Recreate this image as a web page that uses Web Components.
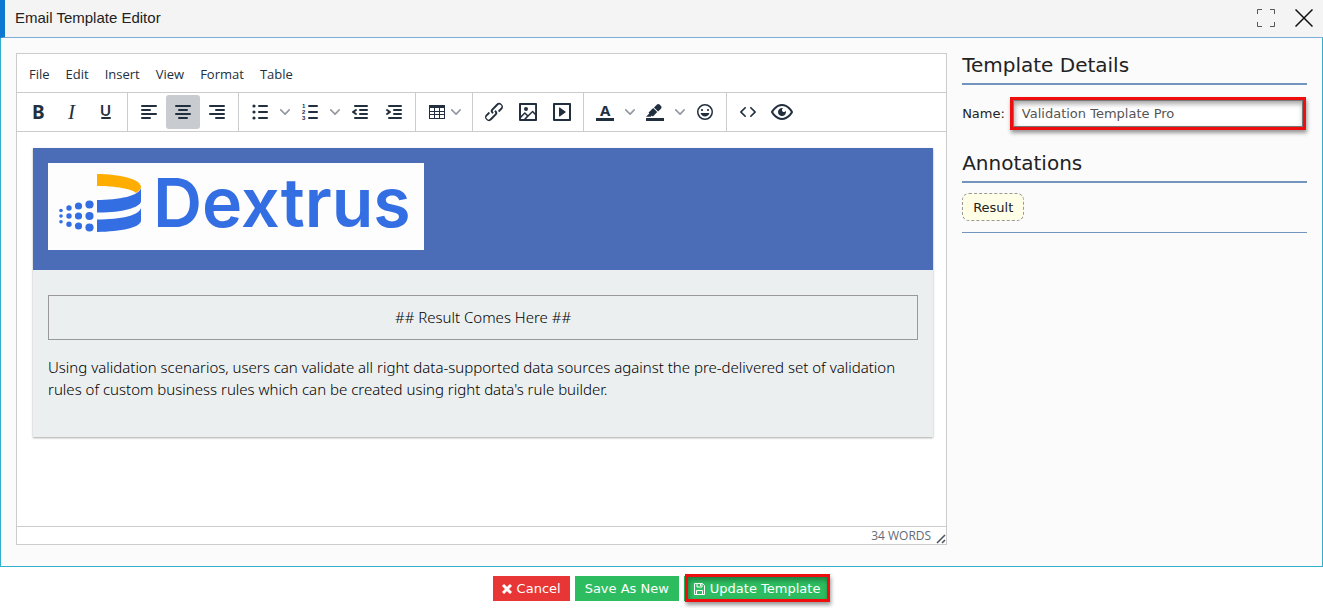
<!DOCTYPE html>
<html lang="en">
<head>
<meta charset="utf-8">
<title>Email Template Editor</title>
<style>
html, body { margin: 0; background: #fff; }
</style>
</head>
<body>
<template-dialog></template-dialog>

<script>
const row = (x, y, end = 19) => `<path d="M${x} ${y}H${end}" stroke="currentColor" stroke-width="2" stroke-linecap="round"/>`;
const ICONS = {
  bold: `<text x="6" y="19" font-family="Noto Sans" font-weight="700" font-size="19">B</text>`,
  italic: `<text x="8" y="19" font-family="Liberation Serif" font-style="italic" font-size="21">I</text>`,
  underline: `<text x="6" y="16" font-family="Inter" font-weight="600" font-size="15">U</text>${row(8, 18, 16)}`,
  left: row(5, 6) + row(5, 10, 13) + row(5, 14) + row(5, 18, 13),
  center: row(5, 6) + row(8, 10, 16) + row(5, 14) + row(8, 18, 16),
  right: row(5, 6) + row(11, 10) + row(5, 14) + row(11, 18),
  bullets: row(11, 6) + row(11, 12) + row(11, 18) + `<circle cx="6" cy="6" r="1.6"/><circle cx="6" cy="12" r="1.6"/><circle cx="6" cy="18" r="1.6"/>`,
  numbers: row(11, 6) + row(11, 12) + row(11, 18) + `<g font-family="Liberation Sans" font-weight="700" font-size="6"><text x="4" y="8">1</text><text x="4" y="14">2</text><text x="4" y="20">3</text></g>`,
  outdent: row(7, 6) + row(12, 10) + row(12, 14) + row(7, 18) + `<path d="M8.6 13.2a1 1 0 01-1.2 1.6l-3-2a1 1 0 010-1.6l3-2a1 1 0 011.2 1.6L6.8 12l1.8 1.2z"/>`,
  indent: row(7, 6) + row(12, 10) + row(12, 14) + row(7, 18) + `<path d="M4.4 13.2a1 1 0 001.2 1.6l3-2a1 1 0 000-1.6l-3-2a1 1 0 00-1.2 1.6L6.2 12l-1.8 1.2z"/>`,
  table: `<path d="M4 5h16v14H4V5zm1 3v3h4V8H5zm5 0v3h4V8h-4zm5 0v3h4V8h-4zM5 12v2h4v-2H5zm5 0v2h4v-2h-4zm5 0v2h4v-2h-4zM5 15v3h4v-3H5zm5 0v3h4v-3h-4zm5 0v3h4v-3h-4z" fill-rule="evenodd"/>`,
  link: `<path d="M6.2 12.3a1 1 0 011.4 1.4l-2.1 2a2 2 0 102.7 2.8l4.8-4.8a1 1 0 000-1.4 1 1 0 111.4-1.3 2.9 2.9 0 010 4L9.6 20a3.9 3.9 0 01-5.5-5.5l2-2zm11.6-.6a1 1 0 01-1.4-1.4l2-2a2 2 0 10-2.6-2.8L11 10.3a1 1 0 000 1.4A1 1 0 119.6 13a2.9 2.9 0 010-4L14.4 4a3.9 3.9 0 015.5 5.5l-2 2z"/>`,
  image: `<path fill-rule="evenodd" d="M5 15.7l3.3-3.2c.3-.3.7-.3 1 0L12 15l4.1-4c.3-.4.8-.4 1 0l2 1.9V5H5v10.7zM5 18V19h3l2.8-2.9-2-2L5 17.9zm14-3l-2.5-2.4-6.4 6.5H19v-4zM4 3h16c.6 0 1 .4 1 1v16c0 .6-.4 1-1 1H4a1 1 0 01-1-1V4c0-.6.4-1 1-1zm6 8a2 2 0 100-4 2 2 0 000 4z"/>`,
  media: `<path fill-rule="evenodd" d="M4 3h16c.6 0 1 .4 1 1v16c0 .6-.4 1-1 1H4a1 1 0 01-1-1V4c0-.6.4-1 1-1zm1 2v14h14V5H5zm4.8 2.6l5.6 4a.5.5 0 010 .8l-5.6 4A.5.5 0 019 16V8a.5.5 0 01.8-.4z"/>`,
  color: `<path d="M3 18h18v3H3z"/><text x="7" y="16" font-family="Noto Sans" font-weight="700" font-size="15">A</text>`,
  highlight: `<path d="M3 18h18v3H3zM7.7 16.7H3l3.3-3.3-.7-.8L10.2 8l4 4.1-4 4.2c-.2.2-.6.2-.8 0l-.6-.7-1.1 1.1zm5-7.5L11 7.4l3-2.9a2 2 0 012.6 0L18 6c.7.7.7 2 0 2.7l-2.9 2.9-1.8-1.8-.5-.6"/>`,
  emoji: `<path fill-rule="evenodd" d="M9 11c.6 0 1-.4 1-1s-.4-1-1-1a1 1 0 00-1 1c0 .6.4 1 1 1zm6 0c.6 0 1-.4 1-1s-.4-1-1-1a1 1 0 00-1 1c0 .6.4 1 1 1zm-3 5.5c2.1 0 4-1.5 4.4-3.5H7.6c.5 2 2.3 3.5 4.4 3.5zM12 4a8 8 0 100 16 8 8 0 000-16zm0 14.5a6.5 6.5 0 110-13 6.5 6.5 0 010 13z"/>`,
  code: `<path d="M9.8 15.7c.3.3.3.8 0 1-.3.4-.9.4-1.2 0l-4.4-4.1a.8.8 0 010-1.2l4.4-4.2c.3-.3.9-.3 1.2 0 .3.3.3.8 0 1.1L6 12l3.8 3.7zM14.2 15.7c-.3.3-.3.8 0 1 .4.4.9.4 1.2 0l4.4-4.1c.3-.3.3-.8 0-1.2l-4.4-4.2a.8.8 0 00-1.2 0c-.3.3-.3.8 0 1.1L18 12l-3.8 3.7z"/>`,
  preview: `<path fill-rule="evenodd" d="M3.5 12.5c.5.8 1.1 1.6 1.8 2.3 2 2 4.2 3.2 6.7 3.2s4.7-1.2 6.7-3.2a16.2 16.2 0 002.1-2.8 15.7 15.7 0 00-2.1-2.8c-2-2-4.2-3.2-6.7-3.2a9.3 9.3 0 00-6.7 3.2A16.2 16.2 0 003.2 12c0 .2.2.3.3.5zm-2.4-1l.7-1.2L4 7.8C6.2 5.4 8.9 4 12 4c3 0 5.8 1.4 8.1 3.8a18.2 18.2 0 012.8 3.7v1l-.7 1.2-2.1 2.5c-2.3 2.4-5 3.8-8.1 3.8-3 0-5.8-1.4-8.1-3.8a18.2 18.2 0 01-2.8-3.7 1 1 0 010-1z"/><path d="M13.1 8.2a2 2 0 102.7 2.6 4 4 0 11-2.7-2.6z"/>`
};
const define = (name, html) => customElements.define(name, class extends HTMLElement {
  constructor() {
    super();
    this.attachShadow({ mode: 'open' }).innerHTML = html;
  }
});

class ToolButton extends HTMLElement {
  connectedCallback() {
    if (this.shadowRoot) return;
    const menu = this.hasAttribute('menu');
    this.attachShadow({ mode: 'open' }).innerHTML = `
<style>
:host { display: block; color: #222f3e; }
button { display: flex; align-items: center; height: 34px; min-width: 34px; padding: 0 5px; border: 0; border-radius: 3px; background: none; color: inherit; }
:host([active]) button { background: #c8cbcf; }
:host([menu=split]) button { padding-right: 0; gap: 8px; width: 50px; }
:host([menu=joined]) button { width: 48px; padding-right: 0; gap: 2px; }
svg { flex: none; fill: currentColor; }
.chevron { fill: #90979f; }
</style>
<button type="button" aria-label="${this.getAttribute('label')}">
<svg width="24" height="24" viewBox="0 0 24 24">${ICONS[this.getAttribute('icon')]}</svg>
${menu ? '<svg class="chevron" width="10" height="10" viewBox="0 0 10 10"><path d="M8.7 2.2c.3-.3.8-.3 1 0 .4.4.4.9 0 1.2L5.7 7.8c-.3.3-.9.3-1.2 0L.2 3.4a.8.8 0 010-1.2c.3-.3.8-.3 1.1 0L5 6l3.7-3.8z"/></svg>' : ''}
</button>`;
  }
}
customElements.define('tool-button', ToolButton);

define('tool-group', `
<style>
:host { display: flex; align-items: center; height: 38px; padding: 0 4px; border-right: 1px solid #ccc; }
:host(:last-of-type) { border-right: 0; }
</style><slot></slot>`);

define('brand-logo', `
<style>
:host { display: block; width: 376px; max-width: 100%; background: #fdfdfd; }
svg { display: block; width: 100%; overflow: visible; }
</style>
<svg viewBox="0 0 376 87" role="img" aria-label="Dextrus">
<g fill="#346ee3">
<circle cx="13" cy="47.5" r="1.8"/><circle cx="13" cy="53" r="1.8"/><circle cx="13" cy="58.7" r="1.8"/>
<circle cx="21" cy="45" r="2.7"/><circle cx="21" cy="53" r="2.7"/><circle cx="21" cy="61.3" r="2.7"/>
<circle cx="30.5" cy="43" r="3.6"/><circle cx="30.5" cy="53" r="3.6"/><circle cx="30.5" cy="63" r="3.6"/>
<circle cx="41.5" cy="41.5" r="4.1"/><circle cx="41.5" cy="53" r="4.1"/><circle cx="41.5" cy="64.5" r="4.1"/>
<path d="M49 37c21 0 44-4 44-13v14c0 7-22 12-44 11.5z"/>
<path d="M49 56.5c24 0 43-4 44-12v13c0 7-20 11-44 11.5z"/>
<text x="105" y="64" font-family="Inter" font-weight="600" font-size="68">Dextrus</text>
</g>
<path fill="#ffad00" d="M49 11c22 0 44 5 44 13 0 2-2 4-5 6-4-4-20-7-39-7z"/>
</svg>`);

define('menu-bar', `
<style>
:host { display: flex; align-items: center; height: 36px; padding: 2px 4px 0; border-bottom: 1px solid #ccc; }
button { border: 0; background: none; padding: 4px 8px; color: #222f3e; font: 13px/20px "Open Sans", sans-serif; }
</style>
<button>File</button><button>Edit</button><button>Insert</button><button>View</button><button>Format</button><button>Table</button>`);

define('tool-bar', `
<style>
:host { display: flex; flex-wrap: wrap; border-bottom: 1px solid #ccc; }
</style>
<tool-group>
<tool-button icon="bold" label="Bold"></tool-button><tool-button icon="italic" label="Italic"></tool-button><tool-button icon="underline" label="Underline"></tool-button>
</tool-group>
<tool-group>
<tool-button icon="left" label="Align left"></tool-button><tool-button icon="center" label="Align center" active></tool-button><tool-button icon="right" label="Align right"></tool-button>
</tool-group>
<tool-group>
<tool-button icon="bullets" label="Bullet list" menu="split"></tool-button><tool-button icon="numbers" label="Numbered list" menu="split"></tool-button><tool-button icon="outdent" label="Decrease indent"></tool-button><tool-button icon="indent" label="Increase indent"></tool-button>
</tool-group>
<tool-group><tool-button icon="table" label="Table" menu="joined"></tool-button></tool-group>
<tool-group>
<tool-button icon="link" label="Link"></tool-button><tool-button icon="image" label="Image"></tool-button><tool-button icon="media" label="Media"></tool-button>
</tool-group>
<tool-group>
<tool-button icon="color" label="Text color" menu="split"></tool-button><tool-button icon="highlight" label="Background color" menu="split"></tool-button><tool-button icon="emoji" label="Emoticons"></tool-button>
</tool-group>
<tool-group><tool-button icon="code" label="Source code"></tool-button><tool-button icon="preview" label="Preview"></tool-button></tool-group>`);

define('mail-preview', `
<style>
:host { display: block; background: #ebeff0; box-shadow: 0 1px 2px rgba(0,0,0,.35); color: #000; font: 300 15px/22px "Noto Sans", sans-serif; }
header { background: #4b6cb7; padding: 15px 15px 20px; }
.body { padding: 25px 15px 37px; }
.result { border: 1px solid #999; padding: 10px 10px 11px; text-align: center; }
p { margin: 16px 0 0; }
</style>
<header><brand-logo></brand-logo></header>
<div class="body">
<div class="result">## Result Comes Here ##</div>
<p>Using validation scenarios, users can validate all right data-supported data sources against the pre-delivered set of validation rules of custom business rules which can be created using right data's rule builder.</p>
</div>`);

define('rich-editor', `
<style>
:host { display: flex; flex-direction: column; box-sizing: border-box; border: 1px solid #ccc; background: #fff; min-width: 0; }
main { flex: 1; padding: 16px 13px 16px 16px; }
footer { display: flex; justify-content: flex-end; height: 17px; border-top: 1px solid #ccc; color: #626b76; font: 12px/17px "Open Sans", sans-serif; }
svg { margin: 7px 0 0 5px; }
</style>
<menu-bar></menu-bar>
<tool-bar></tool-bar>
<main><mail-preview></mail-preview></main>
<footer><span>34 WORDS</span><svg width="10" height="10" viewBox="0 0 10 10" stroke="#4d5662" stroke-width="1.6"><path d="M1 9L9 1M6 9l3-3"/></svg></footer>`);

define('side-section', `
<style>
:host { display: block; }
h2 { margin: 0; padding-bottom: 6px; border-bottom: 2px solid #7394bd; color: #222; font: 20px/24px "DejaVu Sans", sans-serif; }
</style>
<h2><slot name="title"></slot></h2><slot></slot>`);

define('detail-panel', `
<style>
:host { display: block; font: 13px/16px "DejaVu Sans", sans-serif; color: #222; min-width: 0; }
.field { display: flex; align-items: center; gap: 5px; padding: 12px 0 21px; }
.mark { flex: 1; min-width: 0; display: flex; margin-right: 1px; border: 3px solid #ee0e0e; box-shadow: 1px 3px 4px rgba(0,0,0,.4); }
input { flex: 1; min-width: 0; height: 27px; box-sizing: border-box; padding: 0 8px; border: 1px solid #777; background: #fff; box-shadow: inset 1px 3px 5px rgba(0,0,0,.35); color: #555; font: inherit; }
.tags { padding: 10px 0 11px; border-bottom: 1px solid #7394bd; }
.tag { display: inline-block; vertical-align: top; padding: 6px 10px 4px; border: 1px dashed #999; border-radius: 7px; background: #ffffe8; }
</style>
<side-section>
<span slot="title">Template Details</span>
<div class="field"><label for="name">Name:</label><div class="mark"><input id="name" value="Validation Template Pro"></div></div>
</side-section>
<side-section>
<span slot="title">Annotations</span>
<div class="tags"><span class="tag">Result</span></div>
</side-section>`);

define('action-bar', `
<style>
:host { display: flex; justify-content: center; gap: 5px; padding: 9px 0 7px; }
button { position: relative; display: flex; align-items: center; gap: 5px; height: 25px; padding: 0 10px; border: 0; color: #fff; background: #2dbd60; font: 13px/16px "DejaVu Sans", sans-serif; }
.cancel { padding: 0 9px; background: #e83535; }
.marked::after { content: ""; position: absolute; inset: -2px 0 -1px 1px; border: 3px solid #ee0e0e; box-shadow: 1px 3px 4px rgba(0,0,0,.4), inset 1px 3px 5px rgba(0,0,0,.35); }
svg { flex: none; }
</style>
<button class="cancel"><svg width="10" height="10" viewBox="0 0 10 10" stroke="#fff" stroke-width="3"><path d="M1 1l8 8M9 1L1 9"/></svg>Cancel</button>
<button>Save As New</button>
<button class="marked"><svg width="11" height="12" viewBox="0 0 11 12" fill="none" stroke="#fff"><path d="M.5.5h8l2 2v9H.5zM3 .5v3.5h5V.5M2.5 11.5v-4h6v4M6.5 1v2"/></svg>Update Template</button>`);

define('dialog-header', `
<style>
:host { display: flex; align-items: center; box-sizing: border-box; height: 38px; padding: 0 10px 1px 0; border-left: 5px solid #0c78cf; border-bottom: 1px solid #79aed6; background: #f4f4f4; }
h1 { flex: 1; margin: 0 0 0 10px; color: #222; font: 15px/20px "Liberation Sans", sans-serif; }
button { display: flex; padding: 0; border: 0; background: none; }
button + button { margin-left: 20px; }
</style>
<h1>Email Template Editor</h1>
<button aria-label="Full screen"><svg width="18" height="18" viewBox="0 0 18 18" fill="none" stroke="#555"><path d="M.5 5V.5H5M13 .5h4.5V5M17.5 13v4.5H13M5 17.5H.5V13"/></svg></button>
<button aria-label="Close"><svg width="18" height="18" viewBox="0 0 18 18" fill="none" stroke="#111" stroke-width="1.5"><path d="M.5.5l17 17M17.5.5l-17 17"/></svg></button>`);

define('template-dialog', `
<style>
:host { display: flex; flex-direction: column; min-height: 100vh; }
.content { flex: 1; display: grid; grid-template-columns: 27fr 10fr; gap: 15px; padding: 15px 15px 21px; background: #fbfbfb; border: solid #31afcd; border-width: 0 1px 1px; }
</style>
<dialog-header></dialog-header>
<div class="content"><rich-editor></rich-editor><detail-panel></detail-panel></div>
<action-bar></action-bar>`);
</script>
</body>
</html>
